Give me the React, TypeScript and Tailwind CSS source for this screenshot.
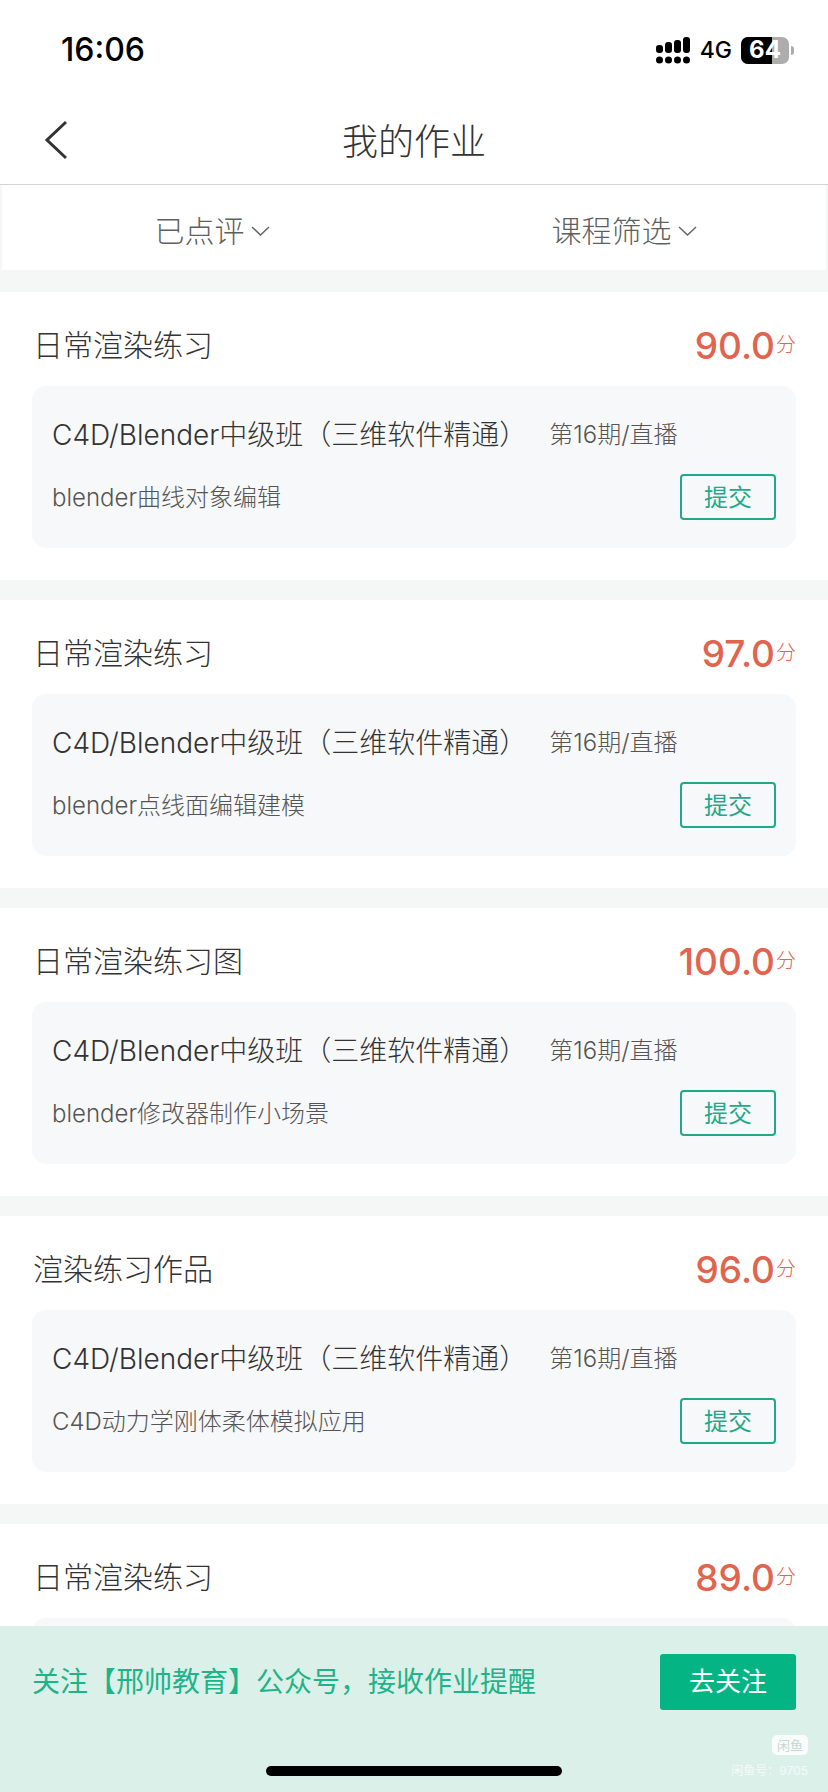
const FONT_STACK = "font-['Inter','Noto_Sans_CJK_SC',sans-serif]";

const HOMEWORK_ITEMS = [
  { title: "日常渲染练习", score: "90.0", lesson: "blender曲线对象编辑" },
  { title: "日常渲染练习", score: "97.0", lesson: "blender点线面编辑建模" },
  { title: "日常渲染练习图", score: "100.0", lesson: "blender修改器制作小场景" },
  { title: "渲染练习作品", score: "96.0", lesson: "C4D动力学刚体柔体模拟应用" },
  { title: "日常渲染练习", score: "89.0" },
];

function SignalIcon() {
  return (
    <svg width="34" height="27" viewBox="0 0 34 27" fill="#000">
      <rect x="0" y="8" width="7" height="8" rx="3" />
      <rect x="9" y="5" width="7" height="11" rx="3" />
      <rect x="18" y="3" width="7" height="13" rx="3" />
      <rect x="27" y="0" width="7" height="16" rx="3" />
      <circle cx="3.5" cy="23" r="3.5" />
      <circle cx="12.5" cy="23" r="3.5" />
      <circle cx="21.5" cy="23" r="3.5" />
      <circle cx="30.5" cy="23" r="3.5" />
    </svg>
  );
}

function Battery() {
  return (
    <div className="flex items-center">
      <div className="relative h-[27px] w-[48px] overflow-hidden rounded-[7px] bg-[#adadad]">
        <div className="h-full w-[31px] bg-black" />
        <span className="absolute inset-0 flex items-center justify-center text-[24px] font-bold leading-none text-white">
          64
        </span>
      </div>
      <div className="ml-[2px] h-[9px] w-[3px] rounded-r-full bg-[#adadad]" />
    </div>
  );
}

function Chevron() {
  return (
    <svg width="19" height="10" viewBox="0 0 19 10" fill="none" stroke="#666" strokeWidth="1.5" className="ml-[6px]">
      <path d="M1 1 L9.5 9 L18 1" />
    </svg>
  );
}

function HomeworkCard({ title, score, lesson }: { title: string; score: string; lesson?: string }) {
  return (
    <div className="mb-[20px] h-[288px] shrink-0 bg-white px-[32px]">
      <div className="flex h-[94px] items-center justify-between pt-[12px]">
        <span className="pl-[1px] text-[30px] font-light leading-none text-[#333]">{title}</span>
        <span className="flex items-center text-[#e0644e]">
          <span className="text-[37px] font-medium leading-none">{score}</span>
          <span className="ml-[1px] text-[20px] font-light leading-none">分</span>
        </span>
      </div>
      <div className="h-[162px] rounded-[14px] bg-[#f7f8fa] px-[20px]">
        {lesson && (
          <>
            <div className="flex h-[88px] items-center pt-[10px]">
              <span className="text-[28px] font-light leading-none text-[#333]">C4D/Blender中级班（三维软件精通）</span>
              <span className="ml-[22px] text-[24px] font-light leading-none text-[#555]">第16期/直播</span>
            </div>
            <div className="flex items-center justify-between">
              <span className="pt-[2px] text-[24px] font-light leading-none text-[#555]">{lesson}</span>
              <button
                type="button"
                className="flex h-[46px] w-[96px] items-center justify-center rounded-[4px] border-2 border-[#1fa98a] pt-[2px] text-[24px] leading-none text-[#1fa98a]"
              >
                提交
              </button>
            </div>
          </>
        )}
      </div>
    </div>
  );
}

export default function App() {
  return (
    <div className={`flex h-[1792px] w-[828px] flex-col overflow-hidden bg-[#f5f6f6] ${FONT_STACK}`}>
      {/* Status bar */}
      <div className="flex h-[100px] shrink-0 items-center justify-between bg-white pl-[61px] pr-[34px]">
        <span className="text-[32px] font-medium leading-none text-black">16:06</span>
        <div className="flex items-center">
          <SignalIcon />
          <span className="ml-[10px] mr-[9px] text-[23px] font-medium leading-none text-black">4G</span>
          <Battery />
        </div>
      </div>

      {/* Nav */}
      <div className="relative flex h-[85px] shrink-0 items-center justify-center border-b border-[#d4d4d4] bg-white">
        <svg width="24" height="40" viewBox="0 0 24 40" fill="none" stroke="#333" strokeWidth="3" className="absolute left-[44px] top-[20px]">
          <path d="M22 2 L3 20 L22 38" />
        </svg>
        <span className="text-[36px] font-light leading-none text-[#333]">我的作业</span>
      </div>

      {/* Filters */}
      <div className="mx-[2px] mb-[22px] flex h-[85px] shrink-0 items-center bg-white pt-[6px] text-[#5f5f5f]">
        <div className="flex w-[420px] items-center justify-center">
          <span className="text-[30px] font-light leading-none">已点评</span>
          <Chevron />
        </div>
        <div className="flex flex-1 items-center justify-center">
          <span className="text-[30px] font-light leading-none">课程筛选</span>
          <Chevron />
        </div>
      </div>

      {/* List */}
      <div className="flex min-h-0 flex-1 flex-col overflow-hidden">
        {HOMEWORK_ITEMS.map((item, index) => (
          <HomeworkCard key={index} {...item} />
        ))}
      </div>

      {/* Follow banner */}
      <div className="relative h-[166px] shrink-0 bg-[#dcf0ea] px-[32px] pt-[28px]">
        <div className="flex items-center justify-between">
          <span className="text-[28px] leading-none text-[#1fb389]">关注【邢帅教育】公众号，接收作业提醒</span>
          <button
            type="button"
            className="flex h-[56px] w-[136px] items-center justify-center rounded-[3px] bg-[#04b583] text-[26px] leading-none text-white"
          >
            去关注
          </button>
        </div>
        {/* Watermark */}
        <div className="absolute right-[20px] top-[109px] flex flex-col items-end text-white/70">
          <div className="flex h-[20px] w-[36px] items-center justify-center rounded-[5px] bg-white/80 text-[13px] leading-none text-[#c4d8d2]">
            闲鱼
          </div>
          <span className="mt-[10px] text-[12px] leading-none">闲鱼号：9705</span>
        </div>
        {/* Home indicator */}
        <div className="absolute left-[266px] top-[140px] h-[10px] w-[296px] rounded-full bg-black" />
      </div>
    </div>
  );
}
